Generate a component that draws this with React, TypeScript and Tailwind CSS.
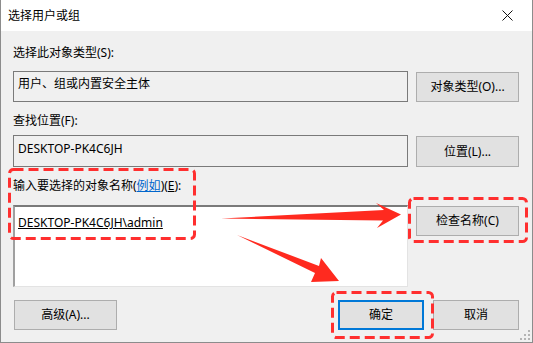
import React from 'react';

const font = { fontFamily: '"Noto Sans", "Noto Sans CJK SC", sans-serif' };

// Windows-style push button
const Btn: React.FC<{ label: React.ReactNode; className?: string; primary?: boolean }> = ({ label, className = '', primary }) => (
  <div
    className={`flex items-center justify-center bg-[#e1e1e1] text-[12px] leading-[16px] text-black ${
      primary ? 'border-2 border-[#0078d7]' : 'border border-[#adadad]'
    } ${className}`}
  >
    {label}
  </div>
);

const Annotations = () => (
  <svg className="absolute inset-0 pointer-events-none" width="533" height="343" viewBox="0 0 533 343">
    <g fill="none" stroke="#ff2f2f" strokeWidth={3} strokeDasharray="10 5">
      <rect x="8.5" y="169.5" width="185" height="69" rx="4" />
      <rect x="408.5" y="198.5" width="117" height="43" rx="4" />
      <rect x="331.5" y="292.5" width="100" height="45" rx="4" />
    </g>
    <g fill="#ff2a1f">
      {/* arrow to 检查名称 */}
      <polygon points="220,218.5 383,210 375,203 400,214.5 376,228 382,220.5" />
      {/* arrow to 确定 */}
      <polygon points="236,235 318,266 320,258 338,281 310,282 314,273" />
    </g>
  </svg>
);

export default function App() {
  return (
    <div className="relative w-[533px] h-[343px] bg-[#f0f0f0] border-l border-r border-b border-[#8c8c8c] flex flex-col overflow-hidden" style={font}>
      {/* 标题栏 */}
      <div className="h-[31px] bg-white flex items-center justify-between pl-[7px] pr-[19px] shrink-0">
        <span className="text-[12px] leading-[16px] text-black">选择用户或组</span>
        <svg width="11" height="11" viewBox="0 0 11 11">
          <path d="M0.5 0.5 L10.5 10.5 M10.5 0.5 L0.5 10.5" stroke="#111" strokeWidth={1} />
        </svg>
      </div>

      <div className="flex flex-col pl-[12px] pr-[13px]">
        <div className="mt-[14px] text-[12px] leading-[16px] text-black">选择此对象类型(S):</div>
        <div className="mt-[10px] flex items-start justify-between">
          <div className="w-[395px] h-[31px] border border-[#7a7a7a] bg-[#f0f0f0] px-[4px] pt-[4px] text-[12px] leading-[16px] text-black">
            用户、组或内置安全主体
          </div>
          <Btn label="对象类型(O)..." className="mt-[1px] w-[103px] h-[30px]" />
        </div>

        <div className="mt-[11px] text-[12px] leading-[16px] text-black">查找位置(F):</div>
        <div className="mt-[6px] flex items-start justify-between">
          <div className="w-[395px] h-[32px] border border-[#7a7a7a] bg-[#f0f0f0] px-[4px] pt-[5px] text-[12px] leading-[16px] text-black">
            DESKTOP-PK4C6JH
          </div>
          <Btn label="位置(L)..." className="mt-[1px] w-[103px] h-[31px]" />
        </div>

        <div className="mt-[11px] text-[12px] leading-[16px] text-black">
          输入要选择的对象名称(<span className="text-[#0066cc] underline">例如</span>)(<span className="underline">E</span>):
        </div>
        <div className="mt-[11px] flex items-start justify-between">
          <div className="w-[395px] h-[82px] border-t-2 border-l-2 border-t-[#7a7a7a] border-l-[#a0a0a0] border-r border-b border-r-[#e3e3e3] border-b-[#e3e3e3] bg-white px-[3px] pt-[8px] text-[12px] leading-[16px] text-black">
            <span className="underline">DESKTOP-PK4C6JH\admin</span>
          </div>
          <Btn label="检查名称(C)" className="mt-[1px] w-[103px] h-[30px]" />
        </div>

        <div className="mt-[13px] flex items-start">
          <Btn label="高级(A)..." className="ml-[1px] w-[103px] h-[30px]" />
          <Btn label="确定" primary className="ml-auto w-[86px] h-[30px]" />
          <Btn label="取消" className="ml-[9px] w-[86px] h-[30px]" />
        </div>
      </div>

      {/* 右下角缩放手柄 */}
      <svg className="absolute right-[2px] bottom-[2px]" width="10" height="10" viewBox="0 0 10 10">
        <g fill="#b4b4b4">
          <rect x="8" y="0" width="2" height="2" />
          <rect x="4" y="4" width="2" height="2" />
          <rect x="8" y="4" width="2" height="2" />
          <rect x="0" y="8" width="2" height="2" />
          <rect x="4" y="8" width="2" height="2" />
          <rect x="8" y="8" width="2" height="2" />
        </g>
      </svg>

      <Annotations />
    </div>
  );
}
